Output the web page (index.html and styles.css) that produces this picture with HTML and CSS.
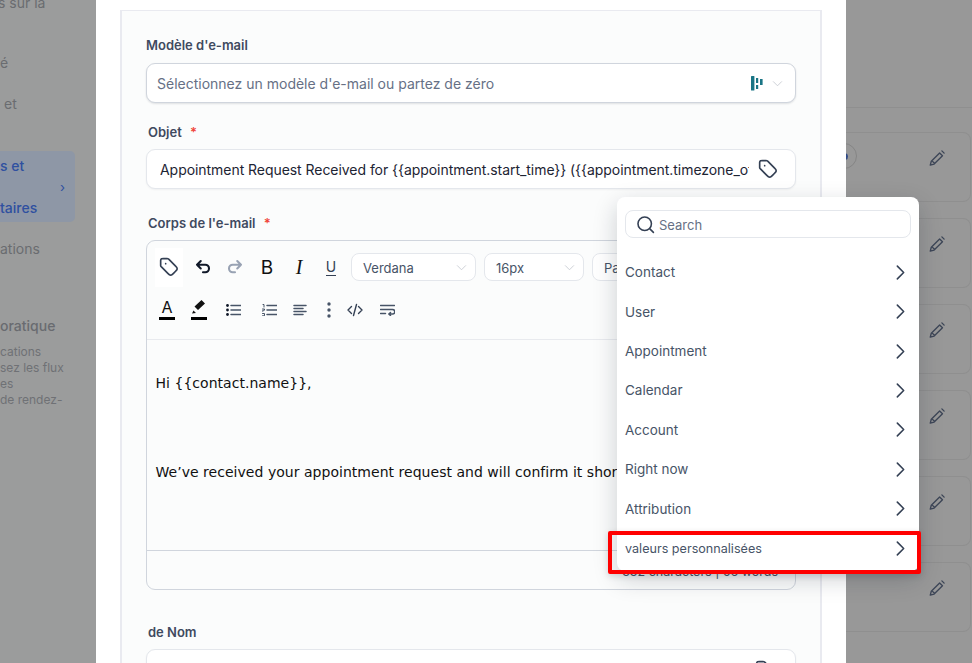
FILE: index.html
```html
<!doctype html>
<html>
<head>
    <meta charset='utf-8'>
    <title>Modèle d'e-mail</title>
    <link rel="stylesheet" href="styles.css">
</head>
<body>
<svg class='defs' width='0' height='0'>
    <symbol id='tag' viewBox='0 0 24 24'><path d='M8 8h.01M2 5.2v4.475c0 .489 0 .733.055.963.05.204.13.4.24.579.123.201.296.374.642.72l7.669 7.669c1.188 1.188 1.782 1.782 2.467 2.004a3 3 0 0 0 1.854 0c.685-.222 1.28-.816 2.467-2.004l2.212-2.212c1.188-1.188 1.782-1.782 2.004-2.467a3 3 0 0 0 0-1.854c-.222-.685-.816-1.28-2.004-2.467l-7.669-7.669c-.346-.346-.519-.519-.72-.642a2 2 0 0 0-.579-.24C10.409 2 10.165 2 9.676 2H5.2c-1.12 0-1.68 0-2.108.218a2 2 0 0 0-.874.874C2 3.52 2 4.08 2 5.2Z'/></symbol>
    <symbol id='pencil' viewBox='0 0 24 24'><path d='M3 21.5l1.4-5.2L15.5 5.2l3.8 3.8L8.2 20.1zM5 15.5l3.6 3.6M18.5 2.5l3 3'/></symbol>
    <symbol id='chev' viewBox='0 0 24 24'><path d='M8 4l8 8-8 8'/></symbol>
    <symbol id='down' viewBox='0 0 24 24'><path d='M3 8l9 9 9-9'/></symbol>
</svg>

<div class='page'>
    <div class='side'>
        <div class='sline first'>s sur la</div>
        <div class='sline l2'>é</div>
        <div class='sline l3 ind'>et</div>
        <div class='active'>
            <div class='sline blue'>s et</div>
            <div class='arrow'>›</div>
            <div class='sline blue bold'>taires</div>
        </div>
        <div class='sline l4'>ations</div>
        <div class='stitle'>oratique</div>
        <div class='small'>cations</div>
        <div class='small'>sez les flux</div>
        <div class='small'>es</div>
        <div class='small'>de rendez-</div>
    </div>

    <div class='modal'>
        <div class='card'>
            <div class='label'>Modèle d'e-mail</div>
            <div class='field field-sel'>
                <span class='ph'>Sélectionnez un modèle d'e-mail ou partez de zéro</span>
                <svg class='logo' width='12' height='15' viewBox='0 0 12 15'><rect x='0' y='0' width='3.4' height='14.5' rx='.5'/><rect x='5' y='2' width='2.2' height='5' /><rect x='5' y='9' width='2.2' height='4'/><rect x='9' y='3' width='2.6' height='6'/></svg>
                <svg class='ico down' width='11' height='11'><use href='#down'/></svg>
            </div>

            <div class='label ind2 gap-a'>Objet <i>*</i></div>
            <div class='field field-obj'>
                <span class='val'>Appointment Request Received for {{appointment.start_time}} ({{appointment.timezone_offset}})</span>
                <svg class='ico tag' width='20' height='20'><use href='#tag'/></svg>
            </div>

            <div class='label ind2 gap-b'>Corps de l'e-mail <i>*</i></div>
            <div class='editor'>
                <div class='toolbar'>
                    <div class='row row1'>
                        <div class='btn btn-tag'><svg class='ico tag' width='20' height='20'><use href='#tag'/></svg></div>
                        <div class='btn'><svg class='ico' width='18' height='18' viewBox='0 0 24 24'><path class='thick' d='M9 4L4 9l5 5M4 9h11a5 5 0 0 1 0 10h-3'/></svg></div>
                        <div class='btn'><svg class='ico' width='18' height='18' viewBox='0 0 24 24'><path class='thick off' d='M15 4l5 5-5 5M20 9H9a5 5 0 0 0 0 10h3'/></svg></div>
                        <div class='btn letter b'>B</div>
                        <div class='btn letter it'>I</div>
                        <div class='btn letter u'><span>U</span></div>
                        <div class='sel s1'>Verdana<svg class='ico down' width='11' height='11'><use href='#down'/></svg></div>
                        <div class='sel s2'>16px<svg class='ico down' width='11' height='11'><use href='#down'/></svg></div>
                        <div class='sel s3'>Paragraph</div>
                    </div>
                    <div class='row row2'>
                        <div class='btn letter col'><span>A</span></div>
                        <div class='btn col'>
                            <svg width='16' height='14' viewBox='0 0 16 14'><path d='M2.500 10.500l-1.500 3 4-.5zM3.500 6.500l3.500 3.500 7-6.500L10.500 0z' fill='#111'/></svg>
                        </div>
                        <div class='btn w36'><svg class='ico list' width='15' height='12' viewBox='0 0 15 12'><path d='M5 1.500h10M5 6h10M5 10.500h10'/><circle cx='1.500' cy='1.500' r='1.400'/><circle cx='1.500' cy='6' r='1.400'/><circle cx='1.500' cy='10.500' r='1.400'/></svg></div>
                        <div class='btn w36'><svg class='ico list' width='15' height='12' viewBox='0 0 15 12'><path d='M5 1.500h10M5 6h10M5 10.500h10'/><path class='thin' d='M1 .5h1v2.500M.5 5h2v1.200H.8v1.200M.5 9.500h2v2.300H.5'/></svg></div>
                        <div class='btn w26'><svg class='ico list' width='14' height='12' viewBox='0 0 14 12'><path d='M1 1.500h12M1 4.500h9M1 7.500h12M1 10.500h9'/></svg></div>
                        <div class='btn'><svg width='4' height='16' viewBox='0 0 4 16'><circle cx='2' cy='2' r='1.700' fill='#475467'/><circle cx='2' cy='8' r='1.700' fill='#475467'/><circle cx='2' cy='14' r='1.700' fill='#475467'/></svg></div>
                        <div class='btn w20'><svg class='ico code' width='16' height='14' viewBox='0 0 16 14'><path d='M4.500 3.500L1 7l3.500 3.500M11.500 3.500L15 7l-3.500 3.500M9.500 1.500l-3 11'/></svg></div>
                        <div class='btn w44'><svg class='ico list' width='15' height='12' viewBox='0 0 15 12'><path d='M.5 1.500h14M.5 5.500h12a2 2 0 0 1 0 4.500H9M10.500 8.500L8.800 10l1.700 1.500M.5 9.500h5'/></svg></div>
                    </div>
                </div>
                <div class='body'>
                    <p>Hi {{contact.name}},</p>
                    <p class='next'>We’ve received your appointment request and will confirm it shortly.</p>
                </div>
                <div class='foot'>332 characters | 56 words</div>
            </div>

            <div class='label ind2 gap-c'>de Nom</div>
            <div class='field field-name'>
                <svg class='ico tag' width='20' height='20'><use href='#tag'/></svg>
            </div>
        </div>
    </div>

    <div class='right'>
        <div class='rtop'></div>
        <div class='rcard'><div class='circle'></div><svg class='ico pen' width='18' height='18'><use href='#pencil'/></svg></div>
        <div class='rcard'><svg class='ico pen' width='18' height='18'><use href='#pencil'/></svg></div>
        <div class='rcard'><svg class='ico pen' width='18' height='18'><use href='#pencil'/></svg></div>
        <div class='rcard'><svg class='ico pen' width='18' height='18'><use href='#pencil'/></svg></div>
        <div class='rcard'><svg class='ico pen' width='18' height='18'><use href='#pencil'/></svg></div>
        <div class='rcard'><svg class='ico pen' width='18' height='18'><use href='#pencil'/></svg></div>
    </div>
</div>

<div class='pop'>
    <div class='search'>
        <svg class='ico mag' width='19' height='19' viewBox='0 0 24 24'><circle cx='11' cy='11' r='8.500'/><path d='M17.500 17.500L22 22'/></svg>
        <span>Search</span>
    </div>
    <div class='items'>
        <div class='item'>Contact<svg class='ico chev' width='19' height='19'><use href='#chev'/></svg></div>
        <div class='item'>User<svg class='ico chev' width='19' height='19'><use href='#chev'/></svg></div>
        <div class='item'>Appointment<svg class='ico chev' width='19' height='19'><use href='#chev'/></svg></div>
        <div class='item'>Calendar<svg class='ico chev' width='19' height='19'><use href='#chev'/></svg></div>
        <div class='item'>Account<svg class='ico chev' width='19' height='19'><use href='#chev'/></svg></div>
        <div class='item'>Right now<svg class='ico chev' width='19' height='19'><use href='#chev'/></svg></div>
        <div class='item'>Attribution<svg class='ico chev' width='19' height='19'><use href='#chev'/></svg></div>
        <div class='item last'>valeurs personnalisées<svg class='ico chev' width='19' height='19'><use href='#chev'/></svg></div>
    </div>
</div>
<div class='redbox'></div>
</body>
</html>
```

FILE: styles.css
```css
*{margin:0;padding:0;box-sizing:border-box;}
html,body{height:663px;overflow:hidden;}
body{position:relative;font-family:Inter,"Liberation Sans",sans-serif;background:#989898;}
.defs{position:absolute;}
.page{display:flex;width:972px;height:663px;overflow:hidden;}

/* dimmed sidebar */
.side{width:96px;flex:none;background:#9b9c9c;color:#6a6c70;font-size:14px;overflow:hidden;}
.sline{height:20px;line-height:20px;white-space:nowrap;}
.first{margin-top:-7px;margin-left:-2px;}
.l2{margin-top:40px;}
.l3{margin-top:21px;}
.ind{padding-left:4px;}
.active{width:75px;height:71px;margin-top:37px;padding-top:5px;background:#8e97a6;border-radius:0 5px 5px 0;color:#2f50a0;}
.blue{color:#2f50a0;font-weight:500;}
.arrow{height:22px;line-height:22px;text-align:right;padding-right:10px;font-size:13px;}
.active .bold{margin-top:0;}
.l4{margin-top:17px;}
.stitle{margin-top:57px;height:20px;line-height:20px;font-weight:500;color:#696b70;}
.small{font-size:12px;height:16px;line-height:16px;color:#6f7175;}
.stitle+.small{margin-top:8px;}

/* modal */
.modal{width:750px;flex:none;background:#fff;padding:10px 24px 0;}
.card{width:702px;height:700px;background:#fbfcfc;border:2px solid #e9eaf0;border-width:1px 2px 0;padding:24px 24px 0;}
.label{height:20px;line-height:20px;margin-bottom:8px;font-size:13px;font-weight:600;color:#3f4a5f;white-space:nowrap;}
.label i{font-style:normal;color:#f04438;margin-left:5px;}
.ind2{padding-left:2px;margin-bottom:7px;}
.gap-a{margin-top:19px;}
.gap-b{margin-top:24px;}
.gap-c{margin-top:32px;}
.field{display:flex;align-items:center;width:650px;height:40px;background:#fff;border:1px solid #e4e7ec;border-radius:9px;box-shadow:0 1px 2px rgba(16,24,40,.05);}
.field-sel{border-color:#d0d5dd;padding:0 12px 0 10px;box-shadow:0 1px 2px rgba(16,24,40,.12);}
.ph{flex:1;font-size:14px;color:#667085;white-space:nowrap;}
.logo{fill:#1a7585;margin-right:9px;}
.field-obj{padding:0 17px 0 13px;}
.val{width:590px;margin-right:9px;overflow:hidden;font-size:14px;letter-spacing:-.05px;color:#1d2433;white-space:nowrap;}
.field-name{justify-content:flex-end;padding-right:20px;align-items:flex-start;padding-top:10px;}

.ico{fill:none;stroke:#344054;stroke-width:2;stroke-linecap:round;stroke-linejoin:round;flex:none;}
.ico.tag{stroke:#344054;}
.ico.down{stroke:#c3c7cf;stroke-width:1.800;}
.ico .thick{stroke:#101828;stroke-width:2.800;}
.ico .off{stroke:#98a2b3;}
.ico.list{stroke:#475467;stroke-width:1.500;}
.ico.list circle{fill:#101828;stroke:none;}
.ico .thin{stroke-width:1;}
.ico.code{stroke:#344054;stroke-width:1.400;}
.ico.pen{stroke:#3d4657;stroke-width:1.800;}
.ico.mag{stroke:#344054;stroke-width:2;}
.ico.chev{stroke:#344054;stroke-width:2;}

/* editor */
.editor{width:650px;height:350px;border:1px solid #d0d5dd;border-radius:9px;overflow:hidden;display:flex;flex-direction:column;}
.toolbar{height:99px;flex:none;padding-top:6px;border-bottom:1px solid #e8eaee;}
.row{display:flex;align-items:center;padding-left:8px;}
.row1{height:40px;}
.row2{height:46px;padding-left:4px;}
.btn{width:32px;height:28px;flex:none;display:flex;align-items:center;justify-content:center;}
.btn-tag{width:28px;height:39px;margin-right:4px;background:#fff;}
.letter{font-size:16px;color:#111;}
.b{font-weight:400;font-size:19px;}
.it{font-family:"Liberation Serif",serif;font-style:italic;font-size:20px;}
.u span{border-bottom:1.500px solid #344054;line-height:16px;font-size:14px;color:#344054;}
.col{position:relative;}
.col::after{content:'';position:absolute;left:8px;right:8px;bottom:4px;height:3px;background:#000;}
.col span{font-size:16px;line-height:18px;margin-top:-6px;}
.col svg{margin-top:-6px;}
.w36{width:36px;}
.w26{width:26px;}
.w20{width:20px;}
.w44{width:44px;}
.sel{display:flex;align-items:center;justify-content:space-between;height:28px;flex:none;margin-right:8px;padding:1px 8px 0 11px;background:#fff;border:1px solid #e4e7ec;border-radius:8px;font-size:13px;color:#475467;white-space:nowrap;}
.s1{width:125px;margin-left:4px;}
.s2{width:100px;}
.s3{width:120px;}
.body{height:211px;flex:none;padding-top:33px;padding-left:8.500px;border-bottom:1px solid #d0d5dd;font-family:"DejaVu Sans",Verdana,sans-serif;font-size:14px;letter-spacing:.03px;line-height:20px;color:#111;white-space:nowrap;overflow:hidden;}
.next{margin-top:69px;}
.foot{flex:1;padding:11px 17px 0 0;text-align:right;font-size:12.500px;line-height:20px;color:#475467;}

/* right side list */
.right{width:126px;flex:none;overflow:hidden;background:#989898;}
.rtop{height:108px;border-bottom:1px solid #8f8f8f;margin-bottom:24px;}
.rcard{display:flex;align-items:flex-start;justify-content:flex-end;width:125px;height:70px;margin-bottom:16px;padding:16px 24px 0 0;border:1px solid #8f8f8f;border-left:0;border-radius:0 8px 8px 0;}
.circle{display:flex;align-items:center;justify-content:center;width:26px;height:26px;margin:-6px auto 0 -15px;border:1px solid #858585;border-radius:50%;}
.circle::after{content:'';width:7px;height:7px;border-radius:50%;background:#2f4a86;}

/* variable menu */
.pop{position:absolute;left:617px;top:197px;width:302px;height:374px;padding:13px 8px 0;background:#fff;border-radius:8px;box-shadow:0 8px 24px rgba(16,24,40,.2);}
.search{display:flex;align-items:center;gap:4px;height:28px;padding-left:10px;border:1px solid #e4e7ec;border-radius:8px;font-size:13px;color:#667085;}
.search span{padding-top:1px;}
.items{padding-top:14.600px;}
.item{display:flex;align-items:center;justify-content:space-between;height:39.400px;padding-right:1px;font-size:13.500px;color:#475467;}
.item.last{font-size:12.600px;}
.redbox{position:absolute;left:608px;top:531px;width:313px;height:43px;border:4px solid #f00;border-radius:2px;box-shadow:0 2px 6px rgba(16,24,40,.15);}
```
